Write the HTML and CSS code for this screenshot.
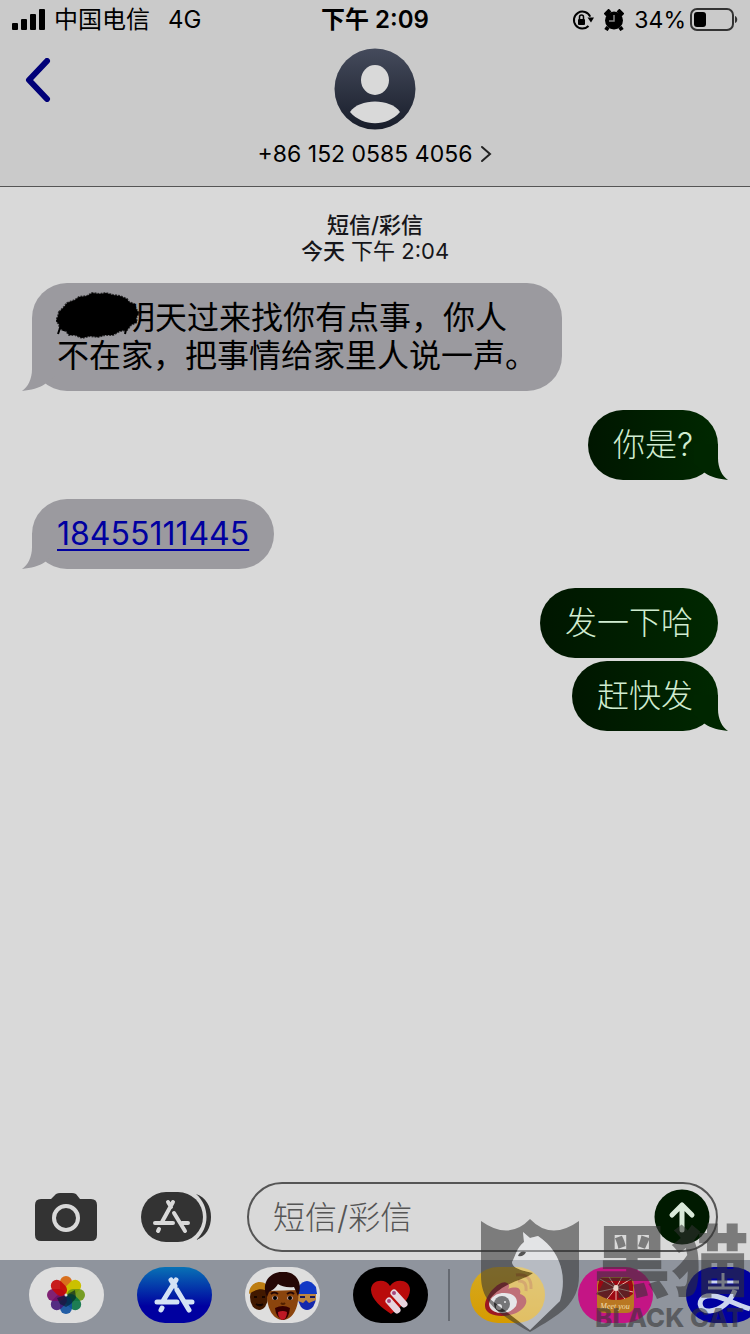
FILE: index.html
```html
<!DOCTYPE html>
<html lang="zh-CN">

<head>
    <meta charset="UTF-8">
    <meta name="viewport" content="width=device-width, initial-scale=1.0">
    <title>短信/彩信</title>
    <link rel="stylesheet" href="styles.css">
</head>

<body>

    <header class="header">
        <div class="status-bar">
            <div class="status-left">
                <svg width="34" height="22" viewBox="0 0 34 22">
                    <rect x="0" y="14" width="6" height="7" rx="1" />
                    <rect x="9" y="10" width="6" height="11" rx="1" />
                    <rect x="18" y="5" width="6" height="16" rx="1" />
                    <rect x="27" y="0" width="6" height="21" rx="1" />
                </svg>
                <span>中国电信</span>
                <span class="network">4G</span>
            </div>
            <div class="status-time">下午 2:09</div>
            <div class="status-right">
                <svg width="22" height="22" viewBox="0 0 22 22">
                    <path d="M16.5 17A8.5 8.5 0 1 1 18.2 7.6" fill="none" stroke="#000" stroke-width="2" />
                    <path d="M15.5 8.5h6.5l-3 5z" />
                    <rect x="6" y="10" width="7" height="6" rx="1" />
                    <path d="M7.5 10V8a2 2 0 0 1 4 0v2" fill="none" stroke="#000" stroke-width="1.5" />
                </svg>
                <svg width="20" height="22" viewBox="0 0 20 22">
                    <circle cx="10" cy="11.5" r="9" />
                    <path d="M1 6L6 1M19 6L14 1M4 18l-2 3M16 18l2 3" stroke="#000" stroke-width="4" />
                    <path d="M10 6v6H5" fill="none" stroke="#888" stroke-width="1.5" />
                </svg>
                <span class="percent">34%</span>
                <svg class="battery" width="48" height="24" viewBox="0 0 48 24">
                    <rect x="1" y="1" width="42" height="21" rx="6" fill="none" stroke="#333" stroke-width="2" />
                    <rect x="4" y="4" width="12" height="15" rx="3" />
                    <path d="M45 8c3 1 3 6 0 7z" fill="#333" />
                </svg>
            </div>
        </div>

        <button class="back" aria-label="返回">
            <svg width="28" height="44" viewBox="0 0 28 44">
                <path d="M23 3L5 22l18 19" fill="none" stroke="#000078" stroke-width="6" stroke-linecap="round" stroke-linejoin="round" />
            </svg>
        </button>

        <a class="contact" href="#">
            <svg width="82" height="82" viewBox="0 0 82 82">
                <defs>
                    <linearGradient id="avatar" x1="0" y1="0" x2="0" y2="1">
                        <stop offset="0" stop-color="#454b5c" />
                        <stop offset="1" stop-color="#181d2a" />
                    </linearGradient>
                </defs>
                <circle cx="41" cy="41" r="40.5" fill="url(#avatar)" />
                <ellipse cx="41" cy="32" rx="14" ry="15" fill="#d9d9d9" />
                <path d="M16 64c9-14 41-14 50 0-13 15-37 15-50 0z" fill="#d9d9d9" />
            </svg>
            <span class="contact-number">
                +86 152 0585 4056
                <svg width="12" height="18" viewBox="0 0 12 18">
                    <path d="M2 2l8 7-8 7" fill="none" stroke="#222" stroke-width="2" stroke-linecap="round" />
                </svg>
            </span>
        </a>
    </header>

    <main class="messages">
        <div class="timestamp">
            <strong>短信/彩信</strong><br>
            <strong>今天</strong> 下午 2:04
        </div>

        <p class="bubble received tail"><span class="scribble"><svg width="90" height="48" viewBox="0 0 90 48">
                    <path d="M6 31l-4 12M8 35v5M63 38h8M72 30l-3 13" stroke="#000" stroke-width="2" />
                    <path d="M3 21l5-5 3-4 8-3 4-3 8-1 5-3 8 1 6-1 7 2 7 1 7 3 2 3 5 2 2 5 3 4-3 5 1 4-6 3-4 5-7 1-7 4-8 0-7 2-8-1-8 2-7-3-6 0-3-4-6-2-1-5-3-3 2-5z" stroke="#000" stroke-opacity=".7" stroke-width="2" stroke-dasharray="2 1" />
                </svg></span>明天过来找你有点事，你人不在家，把事情给家里人说一声。</p>

        <p class="bubble sent tail">你是?</p>

        <p class="bubble received tail"><a href="tel:18455111445">18455111445</a></p>

        <p class="bubble sent">发一下哈</p>
        <p class="bubble sent tail">赶快发</p>
    </main>

    <form class="composer">
        <button type="button" aria-label="相机">
            <svg width="62" height="50" viewBox="0 0 62 50">
                <path d="M6 7h10l5-5q2-1 4-1h12q2 0 4 1l4 5h11q6 0 6 6v30q0 6-6 6H6q-6 0-6-6V13q0-6 6-6z" fill="#333" />
                <circle cx="31" cy="26" r="12" fill="none" stroke="#d9d9d9" stroke-width="4" />
            </svg>
        </button>
        <button type="button" aria-label="App">
            <svg width="70" height="50" viewBox="0 0 70 50">
                <path d="M55 2c20 6 20 40 0 46 14-12 14-34 0-46z" fill="#333" />
                <rect width="62" height="50" rx="25" fill="#333" />
                <g fill="none" stroke="#d9d9d9" stroke-width="4" stroke-linecap="round">
                    <path d="M32 10L21 30M27 10l3 5M33 21l11 18M14 31h18M41 31h6M18 37l-1 2" />
                </g>
            </svg>
        </button>
        <div class="field">
            <input type="text" placeholder="短信/彩信" aria-label="短信/彩信">
            <button type="submit" aria-label="发送">
                <svg width="56" height="56" viewBox="0 0 56 56">
                    <circle cx="28" cy="28" r="27.5" fill="#001a00" />
                    <path d="M28 41V16M18 26l10-10 10 10" fill="none" stroke="#d9ead9" stroke-width="5" stroke-linecap="round" stroke-linejoin="round" />
                </svg>
            </button>
        </div>
    </form>

    <nav class="apps">
        <button class="app photos" aria-label="照片">
            <svg width="75" height="56" viewBox="0 0 75 56">
                <g transform="translate(37 28)">
                    <rect x="-6" y="-19" width="12" height="18" rx="6" fill="#d86f1c" />
                    <rect x="-6" y="-19" width="12" height="18" rx="6" fill="#cbc000" transform="rotate(45)" />
                    <rect x="-6" y="-19" width="12" height="18" rx="6" fill="#6a9610" transform="rotate(90)" opacity=".9" />
                    <rect x="-6" y="-19" width="12" height="18" rx="6" fill="#087245" transform="rotate(135)" opacity=".9" />
                    <rect x="-6" y="-19" width="12" height="18" rx="6" fill="#0d4f9e" transform="rotate(180)" opacity=".9" />
                    <rect x="-6" y="-19" width="12" height="18" rx="6" fill="#451a78" transform="rotate(225)" opacity=".9" />
                    <rect x="-6" y="-19" width="12" height="18" rx="6" fill="#760d68" transform="rotate(270)" opacity=".9" />
                    <rect x="-6" y="-19" width="12" height="18" rx="6" fill="#c40808" transform="rotate(315)" opacity=".9" />
                    <path d="M0 0l9-5 1 8-5 6-5 3-6-3-3-6z" fill="#001a28" opacity=".6" />
                    <circle r="1.5" fill="#ddd" />
                </g>
            </svg>
        </button>
        <button class="app store" aria-label="App Store">
            <svg width="75" height="56" viewBox="0 0 75 56">
                <g fill="none" stroke="#d4e2f5" stroke-width="5" stroke-linecap="round">
                    <path d="M39 13L26 34M34 13l4 6M40 23l12 20M20 35h20M49 35h6M25 41l-1 2" />
                </g>
            </svg>
        </button>
        <button class="app memoji" aria-label="拟我表情">
            <svg width="75" height="56" viewBox="0 0 75 56">
                <ellipse cx="14" cy="30" rx="9" ry="13" fill="#421900" />
                <path d="M4 27c0-14 18-17 21-3l-5-1c-5-2-10 0-16 4z" fill="#bd7d12" />
                <path d="M9 30h3M17 30h3M11 37q4 3 7 0" stroke="#160500" stroke-width="2" />
                <ellipse cx="62" cy="30" rx="9" ry="13" fill="#1428ae" />
                <path d="M53 20q9-12 18 0l1 7-19 1z" fill="#1239c5" />
                <path d="M53 27h18v6l-7 3-3-3-3 3-5-2z" fill="#be8640" />
                <path d="M55 30h5M65 30h5" stroke="#17175a" stroke-width="2" />
                <path d="M22 24c-1 17 6 29 16 29s17-14 15-30z" fill="#8b450d" />
                <path d="M22 30C15 14 27 4 38 5c12-1 21 10 15 24l-4-9c-7 1-13-1-16-3-3 5-7 7-9 8z" fill="#250705" />
                <path d="M26 27q3-3 7 0M42 27q4-3 7 0" stroke="#250705" stroke-width="2" fill="none" />
                <ellipse cx="30" cy="31" rx="3" ry="2" fill="#b99" />
                <ellipse cx="45" cy="31" rx="3" ry="2" fill="#b99" />
                <circle cx="30" cy="31" r="2" />
                <circle cx="45" cy="31" r="2" />
                <path d="M36 36q2 2 4 0" stroke="#512000" stroke-width="2" fill="none" />
                <path d="M30 41q8-4 15 0-1 11-7 12-7-2-8-12z" fill="#360000" />
                <path d="M33 45q5-2 9 0 0 7-5 8-4-2-4-8z" fill="#bd1824" />
            </svg>
        </button>
        <button class="app touch" aria-label="Digital Touch">
            <svg width="75" height="56" viewBox="0 0 75 56">
                <path d="M38 47C29 41 18 32 18 23c0-11 15-12 19-4 5-8 20-7 20 4 0 9-10 18-19 24z" fill="#b90b0b" />
                <g stroke-linecap="round">
                    <path d="M36 34l8 9M41 26l10 11" stroke="#e6d5df" stroke-width="7" />
                    <path d="M36 34l0 0M41 26l0 0" stroke="#a7437c" stroke-width="4" />
                </g>
            </svg>
        </button>
        <span class="divider"></span>
        <button class="app weibo" aria-label="微博">
            <svg width="75" height="56" viewBox="0 0 75 56">
                <path d="M15 39c0-12 16-27 22-23 3 1 2 5 1 6 8-3 14-1 12 5 7 2 8 8 4 13-9 12-39 12-39-1z" fill="#9d1822" />
                <ellipse cx="33" cy="36" rx="14" ry="10" fill="#dedede" transform="rotate(-8 33 36)" />
                <circle cx="32" cy="37" r="8" fill="#222" />
                <circle cx="29" cy="40" r="3" fill="#ddd" />
                <circle cx="35" cy="35" r="1" fill="#ddd" />
                <path d="M48 14q9-1 8 10M46 8q16-2 15 14" fill="none" stroke="#c07514" stroke-width="3" />
            </svg>
        </button>
        <button class="app meet" aria-label="Meet you">
            <svg width="75" height="56" viewBox="0 0 75 56">
                <rect x="19" y="10" width="37" height="36" rx="7" fill="#b97722" />
                <path d="M22 11h31l2 7v9q-7 6-17 6t-18-6v-9z" fill="#9e0712" />
                <path d="M38 21L22 12M38 21L31 10M38 21l6-11M38 21l15-9M38 21l-18 4M38 21l-9 11M38 21v12M38 21l9 11M38 21l17 4" stroke="#e7b6a7" stroke-width="1" />
                <circle cx="38" cy="21" r="3" fill="#ecd6cc" />
                <text x="37" y="42" class="meet-text">Meet you</text>
            </svg>
        </button>
        <button class="app alipay" aria-label="支付宝">
            <svg width="75" height="56" viewBox="0 0 75 56">
                <path d="M22 15h31M22 21h31M37 6v15" fill="none" stroke="#ccd6ee" stroke-width="3" />
                <path d="M49 23C44 36 34 43 24 44c-12 1-13-13-3-15 11-2 20 5 43 13" fill="none" stroke="#ccd6ee" stroke-width="5" />
            </svg>
        </button>
    </nav>

    <div class="watermark">
        <svg width="98" height="115" viewBox="0 0 98 115">
            <path d="M0 2Q28 22 49 0 70 22 98 2v55c0 28-20 39-49 56C20 96 0 85 0 57zM42 13l1 10c-8 7-8 13-12 20 0 5 6 8 21 11C44 61 22 63 9 80l40 31 30-29C87 55 78 31 57 17l-8 2z" fill="#333" fill-opacity=".56" fill-rule="evenodd" />
            <path d="M42 13l1 10c-8 7-8 13-12 20 0 5 6 8 21 11C44 61 22 63 9 80l40 31 30-29C87 55 78 31 57 17l-8 2z" fill="#f2f5fa" fill-opacity=".4" />
            <path d="M37 37q2-6 8-4-2 5-8 4z" fill="#555" />
        </svg>
        <div class="watermark-text">
            <span class="watermark-cn">黑猫</span>
            <span class="watermark-en">BLACK CAT</span>
        </div>
    </div>

</body>

</html>
```
FILE: styles.css
```css
* {
    box-sizing: border-box;
}

body {
    position: relative;
    display: flex;
    flex-direction: column;
    min-height: 100vh;
    margin: 0;
    background-color: #d9d9d9;
    color: #000;
    font-family: Inter, "Noto Sans CJK SC", sans-serif;
}

button {
    flex: none;
    padding: 0;
    border: 0;
    background: none;
    cursor: pointer;
}

svg {
    display: block;
    flex: none;
}

.header {
    display: grid;
    grid-template-columns: 1fr auto 1fr;
    align-items: start;
    padding-bottom: 16px;
    background-color: #cacaca;
    border-bottom: 1px solid #555;
}

.status-bar {
    grid-column: 1 / 4;
    display: grid;
    grid-template-columns: 1fr auto 1fr;
    align-items: center;
    height: 40px;
    padding: 0 12px;
    font-size: 24px;
    line-height: 40px;
}

.status-left,
.status-right {
    display: flex;
    align-items: center;
    gap: 8px;
}

.network {
    margin-left: 10px;
}

.status-right {
    justify-content: flex-end;
    gap: 10px;
}

.percent {
    font-size: 23px;
}

.battery {
    margin-left: -6px;
}

.status-time {
    font-weight: 600;
}

.back {
    justify-self: start;
    margin: 18px 24px;
}

.contact {
    grid-column: 2;
    display: flex;
    flex-direction: column;
    align-items: center;
    gap: 8px;
    padding-top: 8px;
    color: #000;
    text-decoration: none;
}

.contact-number {
    display: flex;
    align-items: center;
    gap: 8px;
    font-size: 23px;
    line-height: 32px;
}

.messages {
    flex: 1;
    display: flex;
    flex-direction: column;
    align-items: flex-start;
    padding: 25px 32px;
}

.timestamp {
    align-self: center;
    color: #16161a;
    font-size: 22px;
    line-height: 26px;
    text-align: center;
}

.timestamp strong {
    font-weight: 500;
}

.bubble {
    position: relative;
    max-width: 530px;
    margin: 19px 0 0;
    padding: 16px 25px;
    border-radius: 35px;
    font-size: 32px;
    line-height: 38px;
}

.received {
    background-color: #9b9a9f;
}

.received a {
    color: #0000a0;
    text-decoration-thickness: 2px;
    text-underline-offset: 4px;
}

.sent {
    align-self: flex-end;
    background: linear-gradient(to right, #001600, #002800);
    color: #d0ecd0;
    font-weight: 300;
}

.sent + .sent {
    margin-top: 3px;
}

.tail::after {
    content: "";
    position: absolute;
    bottom: 0;
    left: -10px;
    width: 34px;
    height: 36px;
    background-color: #9b9a9f;
    clip-path: path("M10 0V14C10 24 6 32 0 36C9 35 17 33 23 29L34 20V0Z");
}

.sent.tail::after {
    left: auto;
    right: -10px;
    background-color: #002600;
    transform: scaleX(-1);
}

.scribble {
    position: relative;
    display: inline-block;
    width: 66px;
    height: 30px;
    vertical-align: bottom;
}

.scribble svg {
    position: absolute;
    left: -1px;
    top: -16px;
}

.composer {
    display: flex;
    align-items: center;
    gap: 44px;
    padding: 0 32px 8px 35px;
}

.field {
    flex: 1;
    display: flex;
    align-items: center;
    min-width: 0;
    height: 70px;
    margin-left: -8px;
    padding: 0 6px 0 24px;
    border: 2px solid #555;
    border-radius: 35px;
}

.field input {
    flex: 1;
    min-width: 0;
    padding: 0;
    border: 0;
    outline: none;
    background: none;
    font-family: inherit;
    font-size: 32px;
    font-weight: 300;
}

.field input::placeholder {
    color: #555;
}

.apps {
    display: flex;
    align-items: center;
    gap: 33px;
    height: 74px;
    padding: 0 0 5px 29px;
    overflow: hidden;
    background-color: #8f949d;
}

.app {
    width: 75px;
    height: 56px;
    border-radius: 28px;
    overflow: hidden;
}

.photos,
.memoji {
    background-color: #dedede;
}

.store {
    background: linear-gradient(#0872b5, #0000a0 70%);
}

.touch {
    background-color: #000;
}

.weibo {
    background: linear-gradient(#d5aa22, #d69b00);
}

.meet {
    background-color: #c41585;
}

.meet-text {
    fill: #f0dfb0;
    font-family: "Liberation Serif", serif;
    font-size: 8px;
    font-style: italic;
    text-anchor: middle;
}

.alipay {
    background-color: #0000a0;
}

.divider {
    flex: none;
    width: 2px;
    height: 52px;
    margin: 0 -13px;
    background-color: #666a72;
}

.watermark {
    position: absolute;
    right: 0;
    bottom: 0;
    display: flex;
    gap: 14px;
    pointer-events: none;
}

.watermark-text {
    display: flex;
    flex-direction: column;
    width: 157px;
    padding-top: 5px;
    color: rgba(50, 50, 50, 0.56);
    font-weight: 900;
    white-space: nowrap;
}

.watermark-cn {
    font-size: 78px;
    line-height: 78px;
}

.watermark-en {
    padding-left: 2px;
    font-size: 26px;
    font-weight: 800;
    line-height: 32px;
}
```
